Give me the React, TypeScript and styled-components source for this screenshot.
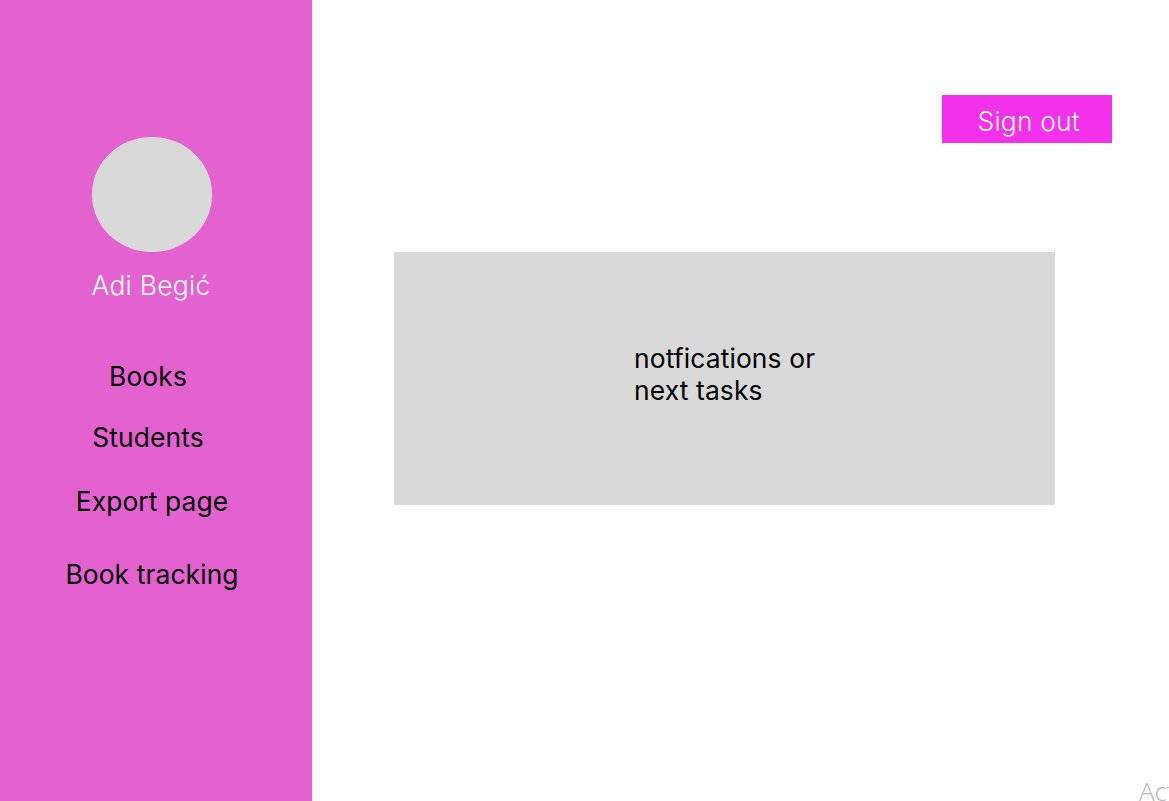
import React from 'react';
import styled, { createGlobalStyle } from 'styled-components';

const GlobalStyle = createGlobalStyle`
  html, body {
    margin: 0;
    padding: 0;
    height: 100%;
    overflow: hidden;
    background: #fff;
    font-family: 'Inter', sans-serif;
  }
`;

const Page = styled.div`
  position: relative;
  display: flex;
  width: 1169px;
  height: 801px;
  overflow: hidden;
`;

const Sidebar = styled.aside`
  display: flex;
  flex-direction: column;
  align-items: center;
  width: 312px;
  flex-shrink: 0;
  padding: 137px 8px 0 0;
  box-sizing: border-box;
  background: #e462d0;
`;

const Avatar = styled.div`
  width: 120.5px;
  height: 114.5px;
  border-radius: 50%;
  background: #d9d9d9;
`;

const UserName = styled.div`
  margin-top: 17.5px;
  margin-right: 2px;
  font-size: 26.4px;
  font-weight: 350;
  letter-spacing: 0.3px;
  line-height: 32px;
  color: #fff;
`;

const Nav = styled.nav`
  display: flex;
  flex-direction: column;
  align-items: center;
  margin-top: 59px;
`;

const NavItem = styled.a<{ $gap: number; $shift: number }>`
  margin-top: ${(p) => p.$gap}px;
  margin-right: ${(p) => p.$shift}px;
  font-size: 26.4px;
  letter-spacing: 0.1px;
  line-height: 32px;
  color: #000;
`;

const Main = styled.main`
  flex: 1;
  display: flex;
  flex-direction: column;
  padding: 94.5px 57px 0 82px;
`;

const TopBar = styled.div`
  display: flex;
  justify-content: flex-end;
`;

const SignOut = styled.button`
  width: 170.5px;
  height: 48.5px;
  padding: 4px 0 0 4px;
  border: 0;
  background: #f331eb;
  color: #fff;
  font-family: 'Inter', sans-serif;
  font-size: 26.4px;
  font-weight: 350;
  letter-spacing: 0.2px;
`;

const NoticePanel = styled.section`
  display: flex;
  flex-direction: column;
  width: 660.5px;
  height: 253.5px;
  margin-top: 108.5px;
  padding: 90px 0 0 240px;
  box-sizing: border-box;
  background: #d9d9d9;
  font-size: 26.4px;
  letter-spacing: 0.13px;
  line-height: 32px;
  color: #000;
`;

const Watermark = styled.div`
  position: absolute;
  left: 1139px;
  top: 775px;
  font-family: 'Open Sans', sans-serif;
  font-size: 26px;
  font-weight: 300;
  line-height: 32px;
  color: #b8b8b8;
  white-space: nowrap;
`;

export default function App() {
  return (
    <Page>
      <GlobalStyle />
      <Sidebar>
        <Avatar />
        <UserName>Adi Begić</UserName>
        <Nav>
          <NavItem $gap={0} $shift={8}>Books</NavItem>
          <NavItem $gap={29} $shift={8}>Students</NavItem>
          <NavItem $gap={32} $shift={0}>Export page</NavItem>
          <NavItem $gap={41} $shift={0}>Book tracking</NavItem>
        </Nav>
      </Sidebar>
      <Main>
        <TopBar>
          <SignOut>Sign out</SignOut>
        </TopBar>
        <NoticePanel>
          <span>notfications or</span>
          <span>next tasks</span>
        </NoticePanel>
      </Main>
      <Watermark>Act</Watermark>
    </Page>
  );
}
